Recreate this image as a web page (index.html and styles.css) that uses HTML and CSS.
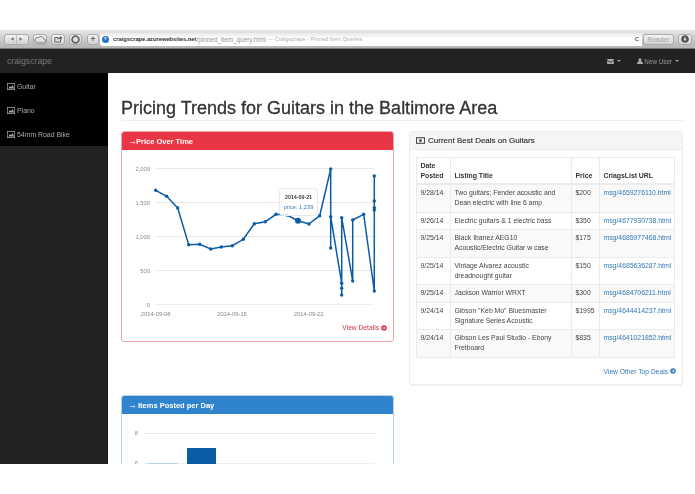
FILE: index.html
```html
<!DOCTYPE html>
<html lang="en">
<head>
<meta charset="utf-8">
<title>craigscrape - Pinned Item Queries</title>
<link rel="stylesheet" href="styles.css">
</head>
<body>
<svg class="sprite" width="0" height="0" aria-hidden="true">
  <symbol id="i-chart" viewBox="0 0 14 12"><path fill="currentColor" d="M0 0h14v12H0zM1.200 1.200v9.600h11.600V1.200zM2.400 9.600 5 5l2.500 2.500L10 3l2 6.600z" fill-rule="evenodd"/></symbol>
  <symbol id="i-arrow" viewBox="0 0 12 12"><circle cx="6" cy="6" r="5.600" fill="currentColor"/><path d="M3 6h5M6 3.400 8.600 6 6 8.600" fill="none" stroke="#fff" stroke-width="1.500"/></symbol>
</svg>
<div class="top-gap"></div>
<div class="window">
  <div class="toolbar">
    <div class="btn btn-nav">
      <svg width="25" height="10" viewBox="0 0 25 10"><path d="M9.500 3v4L6 5zM15.500 3v4L19 5z" fill="#777"/><path d="M12.500 0v10" stroke="#bbb"/></svg>
    </div>
    <div class="btn btn-sq"><svg width="12" height="9" viewBox="0 0 12 9"><path d="M3 8h6.500a2 2 0 0 0 .3-4A3 3 0 0 0 4.500 2.500 2.700 2.700 0 0 0 3 8z" fill="none" stroke="#666" stroke-width=".8"/></svg></div>
    <div class="btn btn-sq"><svg width="9" height="8" viewBox="0 0 9 8"><path d="M6.500 4.500V7H.8V2.500H4" fill="none" stroke="#555" stroke-width=".9"/><path d="M3 5c0-2 1.500-2.500 3-2.500V1l2.500 2L6 5V3.800C4.800 3.800 3.800 4 3 5z" fill="#555"/></svg></div>
    <div class="btn btn-sq btn-circle"><svg width="9" height="9" viewBox="0 0 9 9"><circle cx="4.500" cy="4.500" r="3.400" fill="none" stroke="#666" stroke-width="1.800"/></svg></div>
    <div class="btn btn-plus">+</div>
    <div class="address">
      <svg class="globe" width="7" height="7" viewBox="0 0 7 7"><circle cx="3.500" cy="3.500" r="3.500" fill="#2b74c4"/><path d="M2 1h2l1 2-2 1z" fill="#9cc6ec"/></svg>
      <span class="host">craigscrape.azurewebsites.net</span><span class="path">/pinned_item_query.html</span><span class="page-title"> — Craigscrape - Pinned Item Queries</span>
      <span class="reload">C</span>
    </div>
    <div class="btn btn-reader">Reader</div>
    <div class="btn btn-sq btn-dl"><svg width="8" height="8" viewBox="0 0 8 8"><circle cx="4" cy="4" r="3.800" fill="#555"/><path d="M2.500 4 4 6l1.500-2z M3.500 2h1v2h-1z" fill="#eee"/></svg></div>
  </div>

  <header class="navbar">
    <span class="brand">craigscrape</span>
    <div class="nav-right">
      <span class="nav-item"><svg width="7" height="5" viewBox="0 0 8 6"><path d="M0 0h8v1.200L4 3.500 0 1.200zM0 2.200 4 4.500l4-2.300V6H0z" fill="#aaa"/></svg><i class="caret"></i></span>
      <span class="nav-item nav-user"><svg width="6" height="6" viewBox="0 0 7 7"><circle cx="3.500" cy="2" r="1.800" fill="#aaa"/><path d="M0 7c0-2.500 1.500-3.500 3.500-3.500S7 4.500 7 7z" fill="#aaa"/></svg>New User<i class="caret"></i></span>
    </div>
  </header>

  <div class="main">
    <aside class="sidebar">
      <ul class="side-list">
        <li><svg class="side-icon"><use href="#i-chart"/></svg>Guitar</li>
        <li><svg class="side-icon"><use href="#i-chart"/></svg>Piano</li>
        <li><svg class="side-icon"><use href="#i-chart"/></svg>54mm Road Bike</li>
      </ul>
    </aside>

    <main class="content">
      <h1 class="title">Pricing Trends for Guitars in the Baltimore Area</h1>
      <div class="columns">
        <div class="col-left">
          <section class="panel panel-red">
            <h2 class="panel-head"><span class="long">→</span>Price Over Time</h2>
            <svg class="chart" viewBox="122 150 271 168" width="271" height="168">
              <g class="grid">
                <path d="M155.500 168.500H374M155.500 202.500H374M155.500 236.500H374M155.500 270.500H374"/>
                <path class="grid-base" d="M155.500 304.500H374"/>
              </g>
              <g class="axis axis-y">
                <text x="150" y="170.500">2,000</text>
                <text x="150" y="204.500">1,500</text>
                <text x="150" y="238.500">1,000</text>
                <text x="150" y="272.500">500</text>
                <text x="150" y="306.500">0</text>
              </g>
              <g class="axis axis-x">
                <text x="155.700" y="316">2014-09-08</text>
                <text x="232" y="316">2014-09-15</text>
                <text x="308.700" y="316">2014-09-22</text>
              </g>
              <polyline class="line" points="155.700,190.300 166.700,196.300 177.700,208 188.700,244.700 199.700,244.300 210.700,249 221.300,247 232.300,245.700 243.300,239.300 254.300,223.700 265.300,221.700 276,214.300 287,215 298,220.700 309,224 319.700,215.700 330.700,169 330.700,248 330.700,216.700 341.700,283.300 341.700,295 341.700,288.300 341.700,217.700 352.700,281 352.700,220 363.700,214.300 374.300,291 374.300,210 374.300,207.700 374.300,201 374.300,176"/>
              <g class="dots">
                <circle cx="155.700" cy="190.300" r="1.700"/><circle cx="166.700" cy="196.300" r="1.700"/><circle cx="177.700" cy="208" r="1.700"/><circle cx="188.700" cy="244.700" r="1.700"/><circle cx="199.700" cy="244.300" r="1.700"/><circle cx="210.700" cy="249" r="1.700"/><circle cx="221.300" cy="247" r="1.700"/><circle cx="232.300" cy="245.700" r="1.700"/><circle cx="243.300" cy="239.300" r="1.700"/><circle cx="254.300" cy="223.700" r="1.700"/><circle cx="265.300" cy="221.700" r="1.700"/><circle cx="276" cy="214.300" r="1.700"/><circle cx="287" cy="215" r="1.700"/><circle cx="298" cy="220.700" r="3"/><circle cx="309" cy="224" r="1.700"/><circle cx="319.700" cy="215.700" r="1.700"/><circle cx="330.700" cy="169" r="1.700"/><circle cx="330.700" cy="248" r="1.700"/><circle cx="330.700" cy="216.700" r="1.700"/><circle cx="341.700" cy="283.300" r="1.700"/><circle cx="341.700" cy="295" r="1.700"/><circle cx="341.700" cy="288.300" r="1.700"/><circle cx="341.700" cy="217.700" r="1.700"/><circle cx="352.700" cy="281" r="1.700"/><circle cx="352.700" cy="220" r="1.700"/><circle cx="363.700" cy="214.300" r="1.700"/><circle cx="374.300" cy="291" r="1.700"/><circle cx="374.300" cy="210" r="1.700"/><circle cx="374.300" cy="207.700" r="1.700"/><circle cx="374.300" cy="201" r="1.700"/><circle cx="374.300" cy="176" r="1.700"/>
              </g>
              <rect class="tip" x="279.500" y="188.500" width="38" height="27" rx="3"/>
              <text class="tip-date" x="298.500" y="199">2014-09-21</text>
              <text class="tip-val" x="298.500" y="209">price: 1,239</text>
            </svg>
            <a class="panel-foot foot-red">View Details <svg class="foot-icon"><use href="#i-arrow"/></svg></a>
          </section>

          <section class="panel panel-blue">
            <h2 class="panel-head"><span class="long">→</span>Items Posted per Day</h2>
            <svg class="chart chart-bars" viewBox="122 414 271 70" width="271" height="70">
              <g class="grid">
                <path d="M144 433.500H375"/>
                <path class="grid-base" d="M144 463.500H375"/>
              </g>
              <g class="axis axis-y">
                <text x="138" y="435">8</text>
                <text x="138" y="465">6</text>
              </g>
              <rect class="bar bar-light" x="148" y="463" width="30" height="30"/>
              <rect class="bar" x="187" y="448" width="29" height="40"/>
            </svg>
          </section>
        </div>

        <section class="panel panel-plain">
          <h2 class="panel-head"><svg class="money" viewBox="0 0 10 7"><path d="M0 0h10v7H0zM1 1v5h8V1z" fill="currentColor" fill-rule="evenodd"/><circle cx="5" cy="3.500" r="1.500" fill="currentColor"/></svg>Current Best Deals on Guitars</h2>
          <div class="panel-body">
            <table class="deals">
              <thead>
                <tr><th class="c-date">Date Posted</th><th class="c-title">Listing Title</th><th class="c-price">Price</th><th>CriagsList URL</th></tr>
              </thead>
              <tbody>
                <tr><td>9/28/14</td><td>Two guitars; Fender acoustic and Dean electric with line 6 amp</td><td>$200</td><td><a>msg/4659276110.html</a></td></tr>
                <tr><td>9/26/14</td><td>Electric guitars &amp; 1 electric bass</td><td>$350</td><td><a>msg/4677930738.html</a></td></tr>
                <tr><td>9/25/14</td><td>Black Ibanez AEG10 Acoustic/Electric Guitar w case</td><td>$175</td><td><a>msg/4685977468.html</a></td></tr>
                <tr><td>9/25/14</td><td>Vintage Alvarez acoustic dreadnought guitar</td><td>$150</td><td><a>msg/4685636287.html</a></td></tr>
                <tr><td>9/25/14</td><td>Jackson Warrior WRXT</td><td>$300</td><td><a>msg/4684706211.html</a></td></tr>
                <tr><td>9/24/14</td><td>Gibson "Keb Mo" Bluesmaster Signature Series Acoustic</td><td>$1995</td><td><a>msg/4644414237.html</a></td></tr>
                <tr><td>9/24/14</td><td>Gibson Les Paul Studio - Ebony Fretboard</td><td>$835</td><td><a>msg/4641021852.html</a></td></tr>
              </tbody>
            </table>
            <a class="panel-foot foot-blue">View Other Top Deals <svg class="foot-icon"><use href="#i-arrow"/></svg></a>
          </div>
        </section>
      </div>
    </main>
  </div>
</div>
</body>
</html>
```
FILE: styles.css
```css
* { box-sizing: border-box; }
html, body { margin: 0; padding: 0; background: #fff; }
body {
  width: 695px;
  height: 494px;
  overflow: hidden;
  font-family: "Liberation Sans", Arial, sans-serif;
  color: #333;
}
.sprite { position: absolute; }
.top-gap { height: 30px; }
.window {
  height: 434px;
  overflow: hidden;
  filter: blur(0.35px);
}

/* browser toolbar */
.toolbar {
  height: 19px;
  display: flex;
  align-items: center;
  padding: 0 3px 0 4px;
  background: linear-gradient(#e8e8e8 0, #d6d6d6 30%, #b4b4b4 100%);
  border-bottom: 1px solid #777;
}
.btn {
  height: 11px;
  display: flex;
  align-items: center;
  justify-content: center;
  border: 1px solid #aaa;
  border-radius: 3px;
  background: linear-gradient(#f4f4f4, #d2d2d2);
  flex: none;
  overflow: hidden;
}
.btn-nav { width: 25px; margin-right: 4px; }
.btn-sq { width: 14px; margin-right: 4px; }
.btn-circle { width: 13px; margin-right: 5px; }
.btn-plus { width: 12px; margin-right: 1px; font-size: 9px; font-weight: bold; color: #666; line-height: 9px; }
.address {
  flex: 1;
  min-width: 0;
  height: 13px;
  display: flex;
  align-items: center;
  background: linear-gradient(#e9e9e9, #fff 45%);
  border-radius: 3px 0 0 3px;
  padding: 0 3px 0 2px;
  white-space: pre;
  overflow: hidden;
}
.globe { margin-right: 4px; flex: none; }
.host { color: #333; font-weight: bold; font-size: 5.750px; }
.path { color: #999; font-size: 6.400px; }
.page-title { color: #b0b0b0; font-size: 5.700px; }
.reload { margin-left: auto; color: #666; font-size: 6px; font-weight: bold; }
.btn-reader {
  width: 31px;
  margin: 0 4px 0 1px;
  color: #b5b5b5;
  font-size: 6.500px;
  font-weight: bold;
}
.btn-dl { margin-right: 0; }

/* navbar */
.navbar {
  height: 24px;
  display: flex;
  align-items: center;
  justify-content: space-between;
  background: #222;
  padding: 0 16px 0 7px;
}
.brand { color: #777; font-size: 8.700px; }
.nav-right { display: flex; align-items: center; gap: 16px; color: #999; font-size: 6.300px; }
.nav-item { display: flex; align-items: center; }
.nav-user svg { margin-right: 1px; }
.caret {
  display: block;
  width: 0;
  height: 0;
  margin-left: 3px;
  border: 2px solid transparent;
  border-top-color: #999;
  border-bottom-width: 0;
}

/* layout */
.main { display: flex; height: 391px; }
.sidebar { width: 108px; flex: none; background: #222; }
.side-list {
  margin: 0;
  padding: 1px 0 0;
  list-style: none;
  background: #000;
  color: #aaa;
  font-size: 6.900px;
}
.side-list li {
  height: 24px;
  display: flex;
  align-items: center;
  padding-left: 7px;
}
.side-icon { width: 8px; height: 7px; margin-right: 2px; }

.content { flex: 1; min-width: 0; padding: 0 12px 0 13px; background: #fff; }
.title {
  margin: 0 0 10px;
  padding: 24px 0 4px;
  height: 48px;
  border-bottom: 1px solid #eee;
  font-size: 18px;
  line-height: 22px;
  font-weight: normal;
  -webkit-text-stroke: 0.3px #333;
  color: #333;
  white-space: nowrap;
}
.columns { display: grid; grid-template-columns: 273px 274px; column-gap: 15px; align-items: start; }

/* panels */
.panel {
  border: 1px solid #ddd;
  border-radius: 3px;
  background: #fff;
  overflow: hidden;
}
.panel-head {
  height: 18px;
  margin: 0;
  display: flex;
  align-items: center;
  padding: 0 6px;
  font-size: 7.500px;
  font-weight: bold;
}
.panel-red { border-color: #f4a6ac; height: 211px; margin-bottom: 53px; }
.panel-red .panel-head { background: #e93644; color: #fff; }
.panel-blue { border-color: #b5d3ee; }
.panel-blue .panel-head { background: #2f84cd; color: #fff; }
.panel-plain { border-color: #ececec; height: 254px; box-shadow: 0 1px 1px rgba(0, 0, 0, .05); }
.panel-plain .panel-head { background: #f5f5f5; color: #333; border-bottom: 1px solid #ececec; font-size: 8px; font-weight: normal; -webkit-text-stroke: .15px #333; }
.long { width: 8px; flex: none; font-size: 9px; font-weight: normal; }
.panel-blue .long { margin-right: 2px; }
.money { width: 9px; height: 7px; margin-right: 3px; flex: none; }
.panel-body { padding: 7px 6px 0; }

.chart { display: block; }
.grid path { stroke: #e6e6e6; fill: none; }
.grid .grid-base { stroke: #eee; }
.axis text { font-family: "Liberation Sans", Arial, sans-serif; font-size: 5.800px; fill: #888; }
.axis-y text { text-anchor: end; }
.axis-x text { text-anchor: middle; }
.line { fill: none; stroke: #0b5ca6; stroke-width: 1.500; }
.dots circle { fill: #0b5ca6; }
.tip { fill: rgba(255, 255, 255, .85); stroke: #e8e8e8; }
.tip-date, .tip-val { text-anchor: middle; font-family: "Liberation Sans", Arial, sans-serif; }
.tip-date { fill: #444; font-weight: bold; font-size: 5.300px; }
.tip-val { fill: #3a78b5; font-size: 5.700px; }
.bar { fill: #0b5ca6; }
.bar-light { fill: #bcd3e8; }

.panel-foot {
  display: flex;
  justify-content: flex-end;
  align-items: center;
  font-size: 6.700px;
  gap: 2px;
}
.foot-red { color: #d9303f; padding: 6px 6px 0 0; }
.foot-blue { color: #337ab7; margin-top: 10px; }
.foot-icon { width: 6px; height: 6px; }

/* table */
.deals {
  width: 259px;
  border-collapse: collapse;
  table-layout: fixed;
  font-size: 6.850px;
  line-height: 10px;
}
.deals th, .deals td {
  border: 1px solid #ebebeb;
  padding: 3.250px 3.500px;
  text-align: left;
  vertical-align: top;
  color: #444;
}
.deals th { padding-top: 2.500px; padding-bottom: 2.500px; vertical-align: bottom; color: #333; border-bottom-width: 2px; }
.deals a { color: #337ab7; white-space: nowrap; }
.deals tbody tr:nth-child(odd) td { background: #f9f9f9; }
.c-date { width: 34px; }
.c-title { width: 121px; }
.c-price { width: 28px; }
```
